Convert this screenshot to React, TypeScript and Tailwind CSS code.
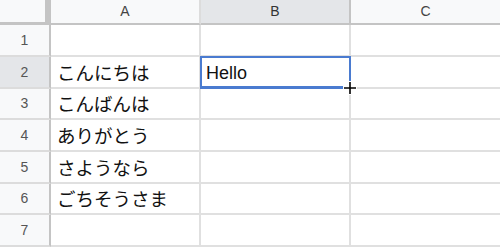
import React from 'react';

const rows: { n: number; h: string; a: string; b: string }[] = [
  { n: 1, h: 'h-[32px]', a: '', b: '' },
  { n: 2, h: 'h-[32px]', a: 'こんにちは', b: 'Hello' },
  { n: 3, h: 'h-[31px]', a: 'こんばんは', b: '' },
  { n: 4, h: 'h-[32px]', a: 'ありがとう', b: '' },
  { n: 5, h: 'h-[32px]', a: 'さようなら', b: '' },
  { n: 6, h: 'h-[31px]', a: 'ごちそうさま', b: '' },
  { n: 7, h: 'h-[32px]', a: '', b: '' },
];

const headFont = { fontFamily: '"Liberation Sans", Arial, sans-serif' };

export default function App() {
  return (
    <div className="w-[500px] h-[247px] overflow-hidden bg-white" style={headFont}>
      {/* column header row */}
      <div className="flex h-[25px]">
        <div className="w-[51px] shrink-0 bg-[#f8f9fa] border-r-[6px] border-b-[3px] border-[#c4c4c4]" />
        <div className="w-[150px] shrink-0 flex items-center justify-center bg-[#f8f9fa] border-r-2 border-b-2 border-r-[#dcdcdc] border-b-[#c4c4c4] text-[14px] text-[#444]">
          A
        </div>
        <div className="w-[150px] shrink-0 flex items-center justify-center bg-[#e4e6e9] border-r-2 border-b-2 border-r-[#c4c4c4] border-b-[#c4c4c4] text-[14px] text-[#333]">
          B
        </div>
        <div className="flex-1 flex items-center justify-center bg-[#f8f9fa] border-b-2 border-[#c4c4c4] text-[14px] text-[#444]">
          C
        </div>
      </div>

      {rows.map(r => (
        <div key={r.n} className={`flex ${r.h}`}>
          <div
            className={`w-[51px] shrink-0 flex items-center justify-center border-r-2 border-b-2 border-r-[#c4c4c4] border-b-[#dcdcdc] text-[14px] text-[#555] ${
              r.n === 2 ? 'bg-[#e4e6e9]' : 'bg-[#f8f9fa]'
            }`}
          >
            {r.n}
          </div>
          <div
            className="w-[150px] shrink-0 flex items-center pl-[6px] pt-[1px] border-r-2 border-b-2 border-[#e0e0e0] text-[18.5px] text-[#111]"
            style={{ fontFamily: '"Noto Sans CJK JP", sans-serif' }}
          >
            {r.a}
          </div>
          <div className="w-[150px] shrink-0 relative flex items-center pl-[5px] pt-[2px] border-r-2 border-b-2 border-[#e0e0e0] text-[18px] text-[#111]">
            {r.b}
            {r.n === 2 && (
              <>
                <div className="absolute z-10 -left-px -top-px w-[151px] h-[33px] border-2 border-b-[3px] border-[#4a7bd0]" />
                <svg className="absolute z-20 left-[141px] top-[23px]" width="16" height="16" viewBox="0 0 16 16">
                  <path d="M8 1v14M1 8h14" stroke="#fff" strokeWidth="4" />
                  <path d="M8 2v12M2 8h12" stroke="#000" strokeWidth="1.6" />
                </svg>
              </>
            )}
          </div>
          <div className="flex-1 border-b-2 border-[#e0e0e0]" />
        </div>
      ))}
    </div>
  );
}
